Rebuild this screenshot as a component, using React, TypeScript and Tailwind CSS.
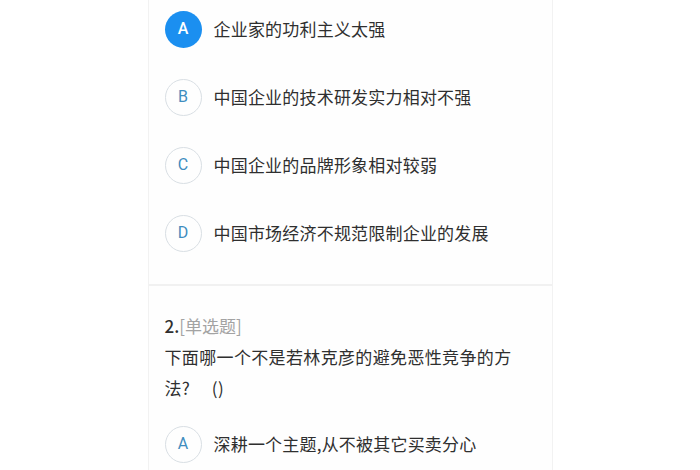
const OPTIONS_1 = [
  { key: "A", text: "企业家的功利主义太强", selected: true },
  { key: "B", text: "中国企业的技术研发实力相对不强" },
  { key: "C", text: "中国企业的品牌形象相对较弱" },
  { key: "D", text: "中国市场经济不规范限制企业的发展" },
];

const FONT = "[font-family:'Noto_Sans_CJK_SC','Noto_Sans',sans-serif]";

function Option({ letter, text, selected }: { letter: string; text: string; selected?: boolean }) {
  return (
    <div className="flex h-[36px] items-center">
      <div
        className={
          selected
            ? "flex h-[37px] w-[37px] shrink-0 items-center justify-center rounded-full bg-[#1b8ff0] text-[16px] font-medium text-white [font-family:Roboto,sans-serif]"
            : "flex h-[37px] w-[37px] shrink-0 items-center justify-center rounded-full border border-[#d9dfe4] text-[16px] text-[#3f8dbf] [font-family:Roboto,sans-serif]"
        }
      >
        {letter}
      </div>
      <span className="ml-[12px] text-[17px] tracking-[0.2px] text-[#2f2f2f]">{text}</span>
    </div>
  );
}

export default function App() {
  return (
    <div className={`min-h-[470px] w-[700px] overflow-hidden bg-white ${FONT}`}>
      <div className="mx-auto w-[405px] border-x border-[#f2f2f2] bg-[#fefefe]">
        <section className="flex flex-col gap-[32px] px-[16px] pb-[33px] pt-[11px]">
          {OPTIONS_1.map((o) => (
            <Option key={o.key} letter={o.key} text={o.text} selected={o.selected} />
          ))}
        </section>
        <div className="h-[2px] bg-[#f1f1f1]" />
        <section className="px-[16px] pt-[24px]">
          <p className="text-[17px] leading-[31px] text-[#2f2f2f]">
            <span className="font-medium">2.</span>
            <span className="text-[#a3a3a3]">[单选题]</span>
          </p>
          <p className="max-w-[352px] text-[17px] leading-[31px] tracking-[0.35px] text-[#2f2f2f]">
            下面哪一个不是若林克彦的避免恶性竞争的方法?{"\u00a0\u3000"}()
          </p>
          <div className="mt-[23px] pb-[20px]">
            <Option letter="A" text="深耕一个主题,从不被其它买卖分心" />
          </div>
        </section>
      </div>
    </div>
  );
}
